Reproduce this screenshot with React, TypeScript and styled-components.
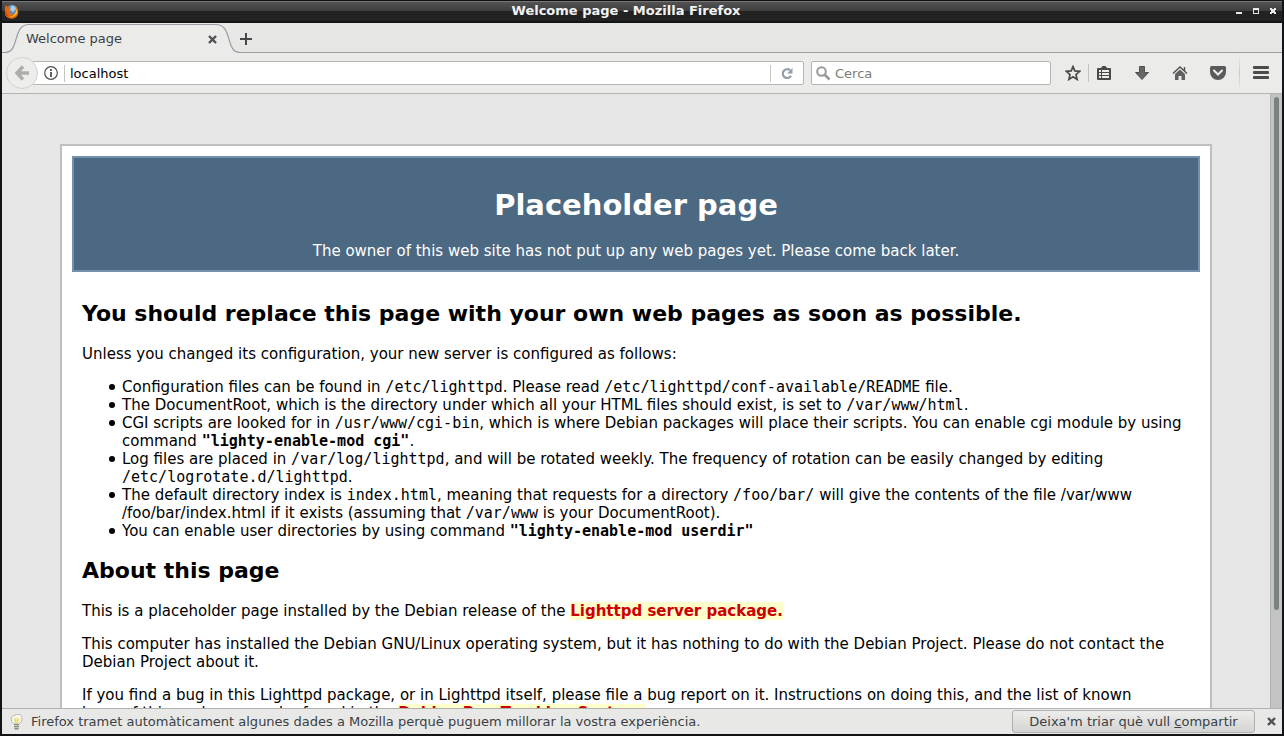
import React from "react";
import styled, { createGlobalStyle } from "styled-components";

const GlobalStyle = createGlobalStyle`
  * { box-sizing: border-box; }
  body { margin: 0; }
  button, input { font: inherit; color: inherit; }
`;

const Window = styled.div`
  display: flex;
  flex-direction: column;
  height: 100vh;
  border: solid #131415;
  border-width: 0 2px 2px;
  background: #e8e8e7;
  color: #3a4145;
  font: 13px/16px "DejaVu Sans", sans-serif;
  overflow: hidden;
`;

const TitleBar = styled.header`
  display: flex;
  align-items: center;
  flex: none;
  height: 23px;
  padding: 0 3px 0 2px;
  border-top: 1px solid #111;
  border-bottom: 2px solid #131415;
  background: linear-gradient(#767676 1px, #535353 1px, #3d3d3d 10px, #222 10px, #222);
`;

const Title = styled.h1`
  flex: 1;
  margin: 0;
  color: #f2f2f2;
  font: bold 13px/18px "DejaVu Sans", sans-serif;
  text-align: center;
`;

const WindowButtons = styled.div`
  display: flex;
  gap: 5px;
`;

const IconButton = styled.button<{ $width?: number; $height?: number }>`
  display: flex;
  align-items: center;
  justify-content: center;
  flex: none;
  width: ${(p) => p.$width ?? 16}px;
  height: ${(p) => p.$height ?? 16}px;
  padding: 0;
  border: 0;
  background: none;
`;

const TabBar = styled.div`
  display: flex;
  flex: none;
  height: 30px;
`;

const Tab = styled.div`
  position: relative;
  isolation: isolate;
  display: flex;
  align-items: center;
  width: 238px;
  padding: 2px 20px 0 24px;
`;

const TabShape = styled.svg`
  position: absolute;
  inset: 0;
  z-index: -1;
`;

const TabLabel = styled.span`
  flex: 1;
`;

const TabStrip = styled.div`
  display: flex;
  align-items: center;
  flex: 1;
  padding-top: 2px;
  border-bottom: 1px solid #9b9e9f;
  background: #e6e6e5;
`;

const Toolbar = styled.div`
  display: flex;
  align-items: center;
  flex: none;
  height: 41px;
  padding-left: 4px;
  border-bottom: 1px solid #b2b4b2;
  background: #ebebe9;
`;

const BackButton = styled.button`
  position: relative;
  display: flex;
  align-items: center;
  justify-content: center;
  width: 32px;
  height: 32px;
  padding: 0;
  border: 1px solid #d2d2d0;
  border-radius: 50%;
  background: #ededeb;
`;

const Field = styled.div`
  display: flex;
  align-items: center;
  height: 24px;
  border: 1px solid #b4b6b2;
  border-radius: 2px;
  background: #fff;
`;

const AddressField = styled(Field)`
  flex: 1;
  margin: 0 7px 0 -6px;
  padding-left: 11px;
`;

const SearchField = styled(Field)`
  width: 240px;
  padding-left: 4px;
  gap: 4px;
`;

const TextInput = styled.input`
  flex: 1;
  min-width: 0;
  height: 20px;
  padding: 0;
  border: 0;
  outline: 0;
  background: none;
  color: #000;
  &::placeholder { color: #7b7b7b; opacity: 1; }
`;

const Divider = styled.span<{ $height: number }>`
  flex: none;
  width: 1px;
  height: ${(p) => p.$height}px;
  background: #c4c5c3;
`;

const AddressDivider = styled(Divider)`
  margin: 0 5px 0 6px;
`;

const MenuDivider = styled(Divider)`
  background: linear-gradient(transparent, #c8c9c7, transparent);
`;

const ToolGroup = styled.div`
  display: flex;
  align-items: center;
  color: #4b4b4b;
`;

const BookmarkGroup = styled(ToolGroup)`
  margin: 0 4px 0 6px;
`;

const MenuGroup = styled(ToolGroup)`
  margin-left: 2px;
`;

const Viewport = styled.div`
  display: flex;
  flex: 1;
  min-height: 0;
`;

const Page = styled.main`
  flex: 1;
  min-width: 0;
  padding: 50px 58px;
  overflow: hidden;
  background: #e6e6e6;
  color: #000;
  font-size: 15px;
  line-height: 18px;
`;

const Card = styled.article`
  padding: 10px;
  border: 2px solid #bfbfbf;
  background: #fff;
`;

const Banner = styled.div`
  padding: 10px;
  border: 2px solid #7590ae;
  background: #4c6983;
  color: #fff;
  text-align: center;
`;

const BannerTitle = styled.h2`
  margin: 19px 0;
  font-size: 29px;
  line-height: 36px;
`;

const BannerText = styled.p`
  margin: 0;
`;

const Body = styled.div`
  padding: 11px 10px;
`;

const Heading = styled.h3`
  margin: 18px 0;
  font-size: 22px;
  line-height: 26px;
`;

const Paragraph = styled.p`
  margin: 15px 0;
`;

const List = styled.ul`
  margin: 15px 0;
  padding-left: 40px;
  list-style: none;
`;

const Item = styled.li`
  &::before {
    content: "";
    display: inline-block;
    width: 6px;
    height: 6px;
    margin: 0 7px 0 -13px;
    border-radius: 50%;
    background: #000;
    vertical-align: 2px;
  }
`;

const Code = styled.code`
  font: 15px/18px "DejaVu Sans Mono", monospace;
`;

const Command = styled(Code)`
  font-weight: bold;
`;

const PageLink = styled.a`
  background: #ffc;
  color: #c00;
  font-weight: bold;
  text-decoration: none;
`;

const ScrollTrack = styled.div`
  flex: none;
  width: 12px;
  padding: 3px 3px 0;
  border-left: 1px solid #b1b3b2;
  background: #c2c4c3;
`;

const ScrollThumb = styled.div`
  width: 5px;
  height: 84%;
  border-radius: 3px;
  background: #7b8080;
`;

const Notice = styled.footer`
  display: flex;
  align-items: center;
  flex: none;
  height: 26px;
  padding: 0 3px 0 8px;
  border-top: 1px solid #b1b1b0;
`;

const NoticeText = styled.span`
  flex: 1;
  margin-left: 8px;
`;

const NoticeButton = styled.button`
  height: 23px;
  width: 243px;
  margin-right: 8px;
  padding: 0;
  border: 1px solid #b0b2ae;
  border-radius: 3px;
  background: linear-gradient(#ededec, #d3d3d2);
`;

const CloseIcon = () => (
  <svg width="9" height="9" viewBox="0 0 9 9" fill="none" stroke="#4d5254" strokeWidth="2.4">
    <path d="M1 1l7 7M8 1l-7 7" />
  </svg>
);

const FirefoxIcon = () => (
  <svg width="15" height="15" viewBox="0 0 15 15">
    <circle cx="7.5" cy="8" r="6.7" fill="#d9560b" />
    <circle cx="8.2" cy="6" r="5.2" fill="#5c8fc8" />
    <path d="M7 2q4-1 5 3l-3 3-3-2z" fill="#a9cde9" />
    <path d="M1 4Q1 2 2.500 1l.8 2 3 1-1 2 2 1-2 1q1 3 5 1.500Q13 8 11.500 2q3 3 2.800 6.500Q13.500 14 8 14.500 1 14 .8 8z" fill="#e36a12" />
    <path d="M12.300 3.500q2 4 0 7Q9 14 5 12.500q7 .5 8-9z" fill="#fcc52d" />
    <path d="M2 7q.2 4 3.500 5.500Q2 12 1 8z" fill="#b92c0d" />
  </svg>
);

const BulbIcon = () => (
  <svg width="13" height="16" viewBox="0 0 13 16">
    <path d="M4 10Q1 8 1 5t5.500-4.500T12 5q0 3-3 5z" fill="#f7f7ed" stroke="#b9b9b4" />
    <path d="M3 5q3.500-3 7 0L8 9H5z" fill="#f4ec9b" />
    <path d="M5 5l1 5M8 5l-1 5" stroke="#d8cf94" />
    <path d="M4 10h5v4l-1 1.500H5L4 14z" fill="#8b8d88" />
    <path d="M4 11.500h5M4 13.500h5" stroke="#c4c5c1" />
  </svg>
);

export default function App() {
  return (
    <Window>
      <GlobalStyle />
      <TitleBar>
        <FirefoxIcon />
        <Title>Welcome page - Mozilla Firefox</Title>
        <WindowButtons>
          <IconButton $width={12} aria-label="Minimize">
            <svg width="8" height="8" viewBox="0 0 8 8" fill="#e8e8e8"><path d="M1 5h6v2H1z" /></svg>
          </IconButton>
          <IconButton $width={12} aria-label="Maximize">
            <svg width="8" height="8" viewBox="0 0 8 8" fill="#e8e8e8"><path fillRule="evenodd" d="M1 1h6v6H1zM2 3v3h4V3z" /></svg>
          </IconButton>
          <IconButton $width={12} aria-label="Close">
            <svg width="8" height="8" viewBox="0 0 8 8" fill="#e8e8e8"><path d="M1 1h2v1h2V1h2v2H6v2h1v2H5V6H3v1H1V5h1V3H1z" /></svg>
          </IconButton>
        </WindowButtons>
      </TitleBar>

      <TabBar>
        <Tab>
          <TabShape width="238" height="30" viewBox="0 0 238 30">
            <path d="M0 29.500h3C18 29.500 10 1.500 27 1.500H214C231 1.500 223 29.500 238 29.500V30H0z" fill="#ebebe9" />
            <path d="M0 29.500h3C18 29.500 10 1.500 27 1.500H214C231 1.500 223 29.500 238 29.500" fill="none" stroke="#989da1" strokeWidth="1.200" />
          </TabShape>
          <TabLabel>Welcome page</TabLabel>
          <IconButton aria-label="Close tab"><CloseIcon /></IconButton>
        </Tab>
        <TabStrip>
          <IconButton $width={12} aria-label="New tab">
            <svg width="12" height="12" viewBox="0 0 12 12" fill="#44484a"><path d="M5 0h2v5h5v2H7v5H5V7H0V5h5z" /></svg>
          </IconButton>
        </TabStrip>
      </TabBar>

      <Toolbar>
        <BackButton aria-label="Back">
          <svg width="16" height="16" viewBox="0 0 16 16" fill="none" stroke="#adadab" strokeWidth="3.4">
            <path d="M9 1.500L3 8l6 6.500M4 8h11" />
          </svg>
        </BackButton>
        <AddressField>
          <svg width="14" height="14" viewBox="0 0 14 14" fill="none" stroke="#505050">
            <circle cx="7" cy="7" r="6.300" strokeWidth="1.200" />
            <path d="M7 3v2M7 6v5" strokeWidth="1.800" />
          </svg>
          <AddressDivider $height={17} />
          <TextInput aria-label="Address" defaultValue="localhost" />
          <Divider $height={17} />
          <IconButton $width={32} aria-label="Reload">
            <svg width="13" height="13" viewBox="0 0 13 13">
              <path d="M9 3.200A4.400 4.400 0 1 0 10 8.800" fill="none" stroke="#929daa" strokeWidth="2.200" />
              <path d="M11.500 1v5.500H6z" fill="#929daa" />
            </svg>
          </IconButton>
        </AddressField>
        <SearchField>
          <svg width="15" height="15" viewBox="0 0 15 15" fill="none" stroke="#999">
            <circle cx="5.500" cy="5.500" r="4.300" strokeWidth="2" />
            <path d="M8.500 8.500l5 5" strokeWidth="2.600" />
          </svg>
          <TextInput aria-label="Search" placeholder="Cerca" />
        </SearchField>
        <BookmarkGroup>
          <IconButton $width={31} $height={32} aria-label="Bookmark this page">
            <svg width="16" height="16" viewBox="0 0 16 16" fill="none" stroke="currentColor" strokeWidth="1.700">
              <path d="M8 1.600l1.800 4.300 4.900.4-3.700 3.200 1.100 4.900L8 11.800l-4.100 2.600L5 9.500 1.300 6.300l4.900-.4z" />
            </svg>
          </IconButton>
          <Divider $height={18} />
          <IconButton $width={30} $height={32} aria-label="Bookmarks">
            <svg width="14" height="16" viewBox="0 0 14 16">
              <path d="M1 3h3l1.500-2h3L10 3h3q1 0 1 1v10q0 1-1 1H1q-1 0-1-1V4q0-1 1-1z" fill="currentColor" />
              <path d="M2 5h2v2H2zM5 5h7v2H5zM2 8h2v2H2zM5 8h7v2H5zM2 11h2v2H2zM5 11h7v2H5z" fill="#ebebe9" />
            </svg>
          </IconButton>
        </BookmarkGroup>
        <ToolGroup>
          <IconButton $width={38} $height={32} aria-label="Downloads">
            <svg width="16" height="16" viewBox="0 0 16 16" fill="#666" stroke="#505050">
              <path d="M5.500 1.500h5v6h4L8 14.500 1.500 7.500h4z" />
            </svg>
          </IconButton>
          <IconButton $width={38} $height={32} aria-label="Home">
            <svg width="16" height="16" viewBox="0 0 16 16">
              <path d="M3 9L8 4.500 13 9v6H9.500v-4h-3v4H3z" fill="#606060" />
              <path d="M1 8.500L8 2l7 6.500M12.500 2v4" fill="none" stroke="#505050" strokeWidth="1.400" />
            </svg>
          </IconButton>
          <IconButton $width={38} $height={32} aria-label="Pocket">
            <svg width="16" height="16" viewBox="0 0 16 16">
              <path d="M1.500 1h13q1.500 0 1.500 1.500V7a8 8 0 0 1-16 0V2.500Q0 1 1.500 1z" fill="#5a5a5a" />
              <path d="M4 5.500l4 4 4-4" fill="none" stroke="#eee" strokeWidth="2" strokeLinecap="round" />
            </svg>
          </IconButton>
        </ToolGroup>
        <MenuGroup>
          <MenuDivider $height={36} />
          <IconButton $width={42} $height={32} aria-label="Open menu">
            <svg width="16" height="14" viewBox="0 0 16 14" fill="currentColor">
              <rect y="0" width="16" height="3" rx="1" />
              <rect y="5" width="16" height="3" rx="1" />
              <rect y="10" width="16" height="3" rx="1" />
            </svg>
          </IconButton>
        </MenuGroup>
      </Toolbar>

      <Viewport>
        <Page>
          <Card>
            <Banner>
              <BannerTitle>Placeholder page</BannerTitle>
              <BannerText>
                The owner of this web site has not put up any web pages yet. Please come back later.
              </BannerText>
            </Banner>
            <Body>
              <Heading>You should replace this page with your own web pages as soon as possible.</Heading>
              <Paragraph>Unless you changed its configuration, your new server is configured as follows:</Paragraph>
              <List>
                <Item>
                  Configuration files can be found in <Code>/etc/lighttpd</Code>. Please read{" "}
                  <Code>/etc/lighttpd/conf-available/README</Code> file.
                </Item>
                <Item>
                  The DocumentRoot, which is the directory under which all your HTML files should exist, is set to{" "}
                  <Code>/var/www/html</Code>.
                </Item>
                <Item>
                  CGI scripts are looked for in <Code>/usr/www/cgi-bin</Code>, which is where Debian packages will
                  place their scripts. You can enable cgi module by using command{" "}
                  <Command>"lighty-enable-mod cgi"</Command>.
                </Item>
                <Item>
                  Log files are placed in <Code>/var/log/lighttpd</Code>, and will be rotated weekly. The frequency of
                  rotation can be easily changed by editing <Code>/etc/logrotate.d/lighttpd</Code>.
                </Item>
                <Item>
                  The default directory index is <Code>index.html</Code>, meaning that requests for a directory{" "}
                  <Code>/foo/bar/</Code> will give the contents of the file /var/www
                  <wbr />
                  /foo/bar/index.html if it exists (assuming that <Code>/var/www</Code> is your DocumentRoot).
                </Item>
                <Item>
                  You can enable user directories by using command <Command>"lighty-enable-mod userdir"</Command>
                </Item>
              </List>
              <Heading>About this page</Heading>
              <Paragraph>
                This is a placeholder page installed by the Debian release of the{" "}
                <PageLink href="#lighttpd">Lighttpd server package.</PageLink>
              </Paragraph>
              <Paragraph>
                This computer has installed the Debian GNU/Linux operating system, but it has nothing to do with the
                Debian Project. Please do not contact the Debian Project about it.
              </Paragraph>
              <Paragraph>
                If you find a bug in this Lighttpd package, or in Lighttpd itself, please file a bug report on it.
                Instructions on doing this, and the list of known
                <br />
                bugs of this package, can be found in the{" "}
                <PageLink href="#bugs">Debian Bug Tracking System.</PageLink>
              </Paragraph>
            </Body>
          </Card>
        </Page>
        <ScrollTrack>
          <ScrollThumb />
        </ScrollTrack>
      </Viewport>

      <Notice>
        <BulbIcon />
        <NoticeText>
          Firefox tramet automàticament algunes dades a Mozilla perquè puguem millorar la vostra experiència.
        </NoticeText>
        <NoticeButton>
          Deixa'm triar què vull <u>c</u>ompartir
        </NoticeButton>
        <IconButton aria-label="Close notification"><CloseIcon /></IconButton>
      </Notice>
    </Window>
  );
}
